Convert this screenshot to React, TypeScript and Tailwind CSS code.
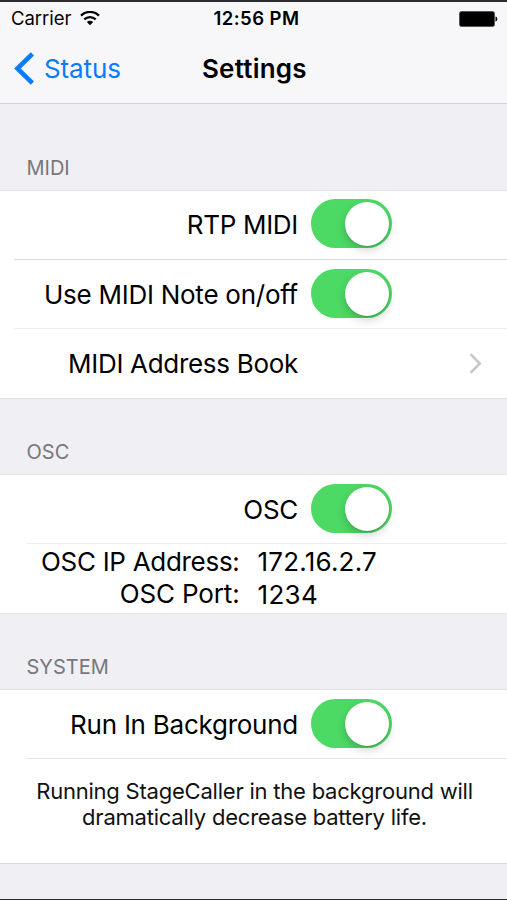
import type { ReactNode } from "react";
import clsx from "clsx";

function StatusBar() {
  return (
    <div className="relative flex h-[34px] items-center justify-between pl-[11px] pr-[9px] text-[18.5px]">
      <div className="flex items-center gap-[9px]">
        <span className="tracking-[-0.05px]">Carrier</span>
        <svg width="20" height="16" viewBox="0 0 20 16" fill="none" stroke="#000" strokeWidth="2.3">
          <path d="M1 4.6C6-.3 14-.3 19 4.6" />
          <path d="M4.3 8.4c3.3-3.1 8.1-3.1 11.4 0" />
          <path d="M10 14.2 6.8 11c1.8-1.6 4.6-1.6 6.4 0Z" fill="#000" stroke="none" />
        </svg>
      </div>
      <span className="absolute left-[213.5px] font-semibold tracking-[0.45px]">12:56 PM</span>
      <svg width="39" height="16" viewBox="0 0 39 16">
        <rect x=".5" y=".5" width="35" height="15" rx="2" fill="#000" stroke="#555" />
        <path d="M36.5 5.5c2.4.6 2.4 4.4 0 5Z" fill="#000" />
      </svg>
    </div>
  );
}

function NavBar() {
  return (
    <div className="flex h-[67px] items-center pl-[14px] pb-[3px]">
      <div className="flex w-[188px] items-center gap-[9px] text-[#087cff]">
        <svg width="21" height="33" viewBox="0 0 21 33" fill="none" stroke="currentColor" strokeWidth="4.6">
          <path d="M18.4 1.8 3.4 16.5l15 14.7" />
        </svg>
        <span className="text-[26px] tracking-[-0.1px]">Status</span>
      </div>
      <h1 className="text-[26px] font-semibold tracking-[0.2px]">Settings</h1>
    </div>
  );
}

function Switch({ className }: { className?: string }) {
  return (
    <div
      className={clsx(
        "flex h-[49px] w-[80.5px] shrink-0 items-center justify-end rounded-full bg-[#4cd964] pr-[2.5px]",
        className,
      )}
    >
      <div className="h-[44px] w-[44px] rounded-full bg-white shadow-[0_4px_10px_rgba(0,0,0,0.18),0_1px_1px_rgba(0,0,0,0.15)]" />
    </div>
  );
}

type RowProps = {
  label: string;
  children?: ReactNode;
  className?: string;
};

function Row({ label, children, className }: RowProps) {
  return (
    <div className={clsx("flex items-center", className)}>
      <span className="w-[298px] text-right text-[26px]">{label}</span>
      {children}
    </div>
  );
}

function SectionTitle({ children, className }: { children: ReactNode; className?: string }) {
  return (
    <h2
      className={clsx(
        "flex items-end border-b border-[#e4e4e8] pl-[26.5px] text-[20px] text-[#77777c]",
        className,
      )}
    >
      {children}
    </h2>
  );
}

function Divider({ className }: { className?: string }) {
  return <div className={clsx("h-px shrink-0", className)} />;
}

export default function App() {
  return (
    <div className="flex h-[900px] w-[507px] flex-col overflow-hidden border-y border-[#2b2b2d] bg-[#efeff4] font-['Inter',sans-serif] text-black">
      <header className="h-[103px] shrink-0 border-t border-b border-t-[#2b2b2d] border-b-[#d5d5d9] bg-[#f7f7f9]">
        <StatusBar />
        <NavBar />
      </header>

      <SectionTitle className="h-[87px] pb-[7px]">MIDI</SectionTitle>
      <section className="bg-white">
        <Row label="RTP MIDI" className="h-[68px] gap-[13px] pb-px tracking-[-0.3px]">
          <Switch className="mb-[2px]" />
        </Row>
        <Divider className="ml-[14px] bg-[#d9d9dc]" />
        <Row label="Use MIDI Note on/off" className="h-[68px] gap-[13px] tracking-[-0.25px]">
          <Switch className="mb-px" />
        </Row>
        <Divider className="ml-[14px] bg-[#ededf0]" />
        <Row label="MIDI Address Book" className="h-[69px] justify-between pr-[25px] tracking-[-0.3px]">
          <svg width="13" height="21" viewBox="0 0 13 21" fill="none" stroke="#c7c7cc" strokeWidth="2.6">
            <path d="m1.5 1.2 9.3 9.3-9.3 9.3" />
          </svg>
        </Row>
      </section>

      <SectionTitle className="h-[77px] border-t pb-[7px]">OSC</SectionTitle>
      <section className="bg-white">
        <Row label="OSC" className="h-[68px] gap-[13px] tracking-[-0.3px]">
          <Switch className="mb-px" />
        </Row>
        <Divider className="ml-[27px] bg-[#ededf0]" />
        <dl className="grid h-[69px] grid-cols-[239.5px_1fr] content-start gap-x-[18px] pt-[2px] text-[26px] leading-8 tracking-[-0.3px]">
          <dt className="text-right">OSC IP Address:</dt>
          <dd className="tracking-[0.2px]">172.16.2.7</dd>
          <dt className="text-right tracking-[-0.15px]">OSC Port:</dt>
          <dd className="pt-px tracking-[0.3px]">1234</dd>
        </dl>
      </section>

      <SectionTitle className="h-[77px] border-t pb-[7px]">SYSTEM</SectionTitle>
      <section className="bg-white">
        <Row label="Run In Background" className="h-[68px] gap-[13px] tracking-[-0.25px]">
          <Switch className="mb-px" />
        </Row>
        <Divider className="ml-[26px] bg-[#e6e6ea]" />
        <p className="h-[104px] pt-[19px] pl-[2px] text-center text-[22px] leading-[26px] tracking-[-0.22px] text-[#111]">
          Running StageCaller in the background will
          <br />
          dramatically decrease battery life.
        </p>
        <Divider className="bg-[#d9d9dc]" />
      </section>
    </div>
  );
}
